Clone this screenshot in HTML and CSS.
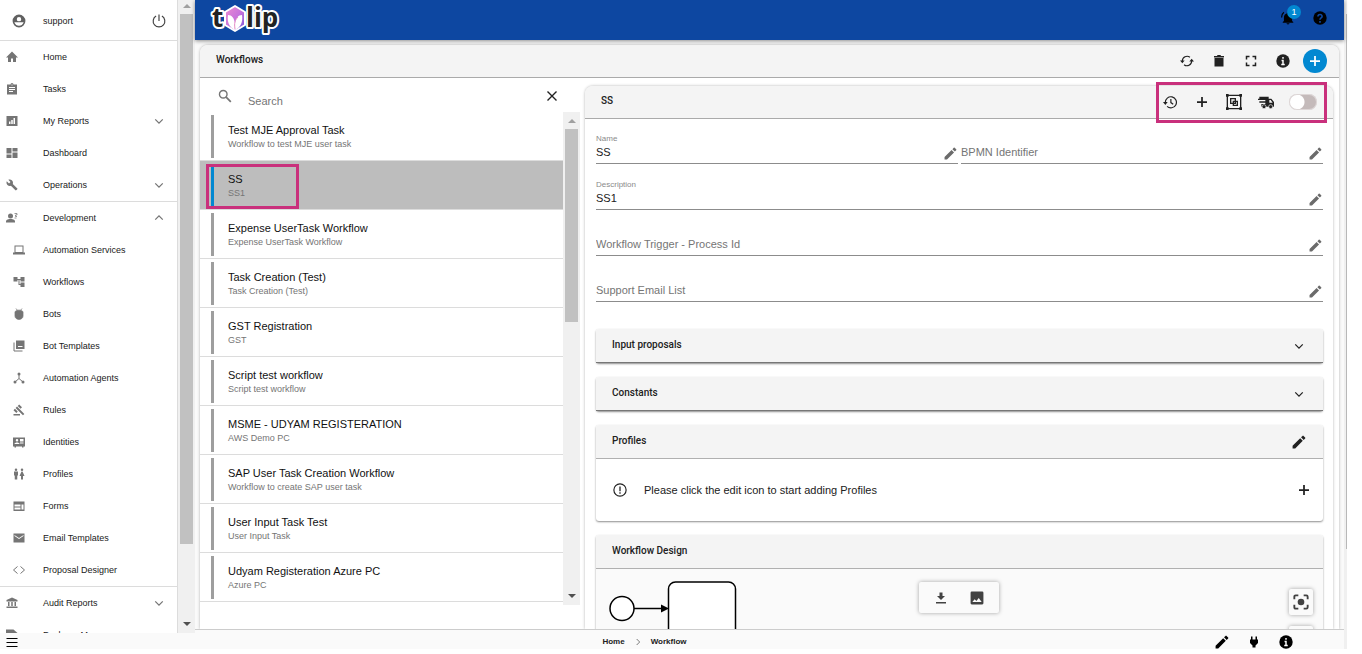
FILE: index.html
```html
<!DOCTYPE html>
<html lang="en">
<head>
<meta charset="utf-8">
<title>Workflows</title>
<link rel="stylesheet" href="styles.css">
</head>
<body>
<svg class="sprite" aria-hidden="true">
  <symbol id="account" viewBox="0 0 24 24"><path fill-rule="evenodd" d="M12 1a11 11 0 1 0 0 22 11 11 0 0 0 0-22zm0 4a3.8 3.8 0 1 1 0 7.600A3.800 3.800 0 0 1 12 5zM4 14h16c-1.500 4-4.500 6-8 6s-6.500-2-8-6z"/></symbol>
  <symbol id="power" viewBox="0 0 24 24"><path d="M12 1v11M7 3.500a10 10 0 1 0 10 0" fill="none" stroke="currentColor" stroke-width="2"/></symbol>
  <symbol id="home" viewBox="0 0 24 24"><path d="M10 22v-7h4v7h6v-9h4L12 1 0 13h4v9z"/></symbol>
  <symbol id="tasks" viewBox="0 0 24 24"><path fill-rule="evenodd" d="M22 3h-7a3 3 0 0 0-6 0H2v20h20V3zM11 3h2v2h-2zm3 15H6v-2h8zm4-4H6v-2h12zm0-4H6V8h12z"/></symbol>
  <symbol id="reports" viewBox="0 0 24 24"><path fill-rule="evenodd" d="M1 2h22v20H1zM6 13h3v5H6zM10.500 10h3v8h-3zM15 6h3v12h-3z"/></symbol>
  <symbol id="dashboard" viewBox="0 0 24 24"><path d="M1 2h10v11H1zM1 15h10v7H1zM13 11h10v11H13zM13 2h10v7H13z"/></symbol>
  <symbol id="wrench" viewBox="0 0 24 24"><path d="M22.700 19l-9.100-9.100c.9-2.300.4-5-1.500-6.900-2-2-5-2.400-7.400-1.300L9 6 6 9 1.600 4.700C.4 7.100.9 10.100 2.900 12.100c1.900 1.900 4.600 2.400 6.900 1.500l9.100 9.100c.4.400 1 .4 1.400 0l2.300-2.300c.5-.4.5-1.100.1-1.400z"/></symbol>
  <symbol id="developer" viewBox="0 0 24 24"><circle cx="9" cy="8" r="5"/><path d="M0 21v-2c0-4 6-5 9-5s9 1 9 5v2z"/><path d="M17 3h5v3h-3v3h3M17 12h4" fill="none" stroke="currentColor" stroke-width="1.500"/></symbol>
  <symbol id="laptop" viewBox="0 0 24 24"><path fill-rule="evenodd" d="M3 3h18v14h3v4H0v-4h3zm2 2v11h14V5z"/></symbol>
  <symbol id="tree" viewBox="0 0 24 24"><path d="M23 11V2h-8v4H9V2H1v9h8V8h2v10h4v4h8v-9h-8v3h-2V8h2v3z"/></symbol>
  <symbol id="bug" viewBox="0 0 24 24"><path d="M4 8c1-5 15-5 16 0v8c0 9-16 9-16 0zM6 1l3 4M18 1l-3 4" stroke="currentColor" stroke-width="1.500"/></symbol>
  <symbol id="library" viewBox="0 0 24 24"><path fill-rule="evenodd" d="M6 1h17v17H6zm4 11v2h9v-2z"/><path d="M2 5v17h17" fill="none" stroke="currentColor" stroke-width="2"/></symbol>
  <symbol id="hub" viewBox="0 0 24 24"><path d="M12 5v8l-8 7M12 13l8 7" fill="none" stroke="currentColor" stroke-width="2"/><circle cx="12" cy="4" r="3"/><circle cx="4" cy="20" r="3"/><circle cx="20" cy="20" r="3"/></symbol>
  <symbol id="gavel" viewBox="0 0 24 24"><path d="M1 20h13v3H1zM5.200 8.100l2.900-2.900 14.600 14.700-2.800 2.800zM12.300 1l5.700 5.700-2.900 2.800-5.600-5.700zM3.800 9.500l5.700 5.700L6.700 18 1 12.300z"/></symbol>
  <symbol id="idcard" viewBox="0 0 24 24"><path fill-rule="evenodd" d="M0 3h24v18h-3v2h-3v-2H6v2H3v-2H0zm3 13h10c0-4-10-4-10 0zm5-10a2.500 2.500 0 1 0 0 5 2.500 2.500 0 0 0 0-5zm6 0v5h7V6zm0 7v2h7v-2z"/></symbol>
  <symbol id="people" viewBox="0 0 24 24"><circle cx="6" cy="3.500" r="2.500"/><circle cx="18" cy="3.500" r="2.500"/><path d="M2 7h8v8H8.500v8h-5v-8H2zM17 7h2l4 9h-3v7h-4v-7h-3z"/></symbol>
  <symbol id="form" viewBox="0 0 24 24"><path fill-rule="evenodd" d="M1 3h22v19H1zm2 6v4h12V9zm0 6v4h12v-4zm14-6v10h4V9z"/></symbol>
  <symbol id="mail" viewBox="0 0 24 24"><path fill-rule="evenodd" d="M1 3h22v18H1zm2 3v2l9 6 9-6V6l-9 6z"/></symbol>
  <symbol id="code" viewBox="0 0 24 24"><path d="M9 5l-8 7 8 7M15 5l8 7-8 7" fill="none" stroke="currentColor" stroke-width="2"/></symbol>
  <symbol id="bank" viewBox="0 0 24 24"><path d="M12 1l11 5v3H1V6zM4 10h3v8H4zM10.500 10h3v8h-3zM17 10h3v8h-3zM1 19h22v3H1z"/></symbol>
  <symbol id="package" viewBox="0 0 24 24"><path d="M0 1h15l8 7v15H0z"/></symbol>
  <symbol id="down" viewBox="0 0 24 24"><path d="M3 8l9 9 9-9" fill="none" stroke="currentColor" stroke-width="3"/></symbol>
  <symbol id="right" viewBox="0 0 24 24"><path d="M8 3l9 9-9 9" fill="none" stroke="currentColor" stroke-width="2.500"/></symbol>
  <symbol id="menu" viewBox="0 0 24 24"><path d="M1 5h22M1 13h22M1 21h22" stroke="currentColor" stroke-width="2"/></symbol>
  <symbol id="search" viewBox="0 0 24 24"><circle cx="9" cy="9" r="6.500" fill="none" stroke="currentColor" stroke-width="2.400"/><path d="M14 14l8 8" stroke="currentColor" stroke-width="3"/></symbol>
  <symbol id="close" viewBox="0 0 24 24"><path d="M3 3l18 18M21 3L3 21" stroke="currentColor" stroke-width="2.800"/></symbol>
  <symbol id="bell" viewBox="0 0 24 24"><path d="M12 23c1.500 0 2.500-1 2.500-2h-5c0 1 1 2 2.500 2zm7-6v-6c0-3.500-2-6-5-6.700V3a2 2 0 0 0-4 0v1.300C7 5 5 7.500 5 11v6l-2 2v1h18v-1z"/><path d="M5 2C2 4 1 7 1 11" fill="none" stroke="currentColor" stroke-width="2"/></symbol>
  <symbol id="help" viewBox="0 0 24 24"><circle cx="12" cy="12" r="11.500"/><path d="M8.500 9.500c0-5 7.500-4.500 7 0-.3 2.500-3.500 2.500-3.500 5.500M12 17v3" fill="none" stroke="#0d47a1" stroke-width="2.800"/></symbol>
  <symbol id="sync" viewBox="0 0 24 24"><path d="M4 12a8 8 0 0 1 13-6.300M20 12a8 8 0 0 1-13 6.300" fill="none" stroke="currentColor" stroke-width="2"/><path d="M0 11h8l-4 5zM16 13h8l-4-5z"/></symbol>
  <symbol id="trash" viewBox="0 0 24 24"><path d="M3 6h18v17H3zM2 2h6l1-2h6l1 2h6v3H2z"/></symbol>
  <symbol id="expand" viewBox="0 0 24 24"><path d="M3 9V3h6M15 3h6v6M21 15v6h-6M9 21H3v-6" fill="none" stroke="currentColor" stroke-width="3"/></symbol>
  <symbol id="info" viewBox="0 0 24 24"><circle cx="12" cy="12" r="11.500"/><path d="M12 5v3M9.500 11H12v6M9 18h6" fill="none" stroke="#fff" stroke-width="2.500"/></symbol>
  <symbol id="plus" viewBox="0 0 24 24"><path d="M12 2v20M2 12h20" stroke="currentColor" stroke-width="3.500"/></symbol>
  <symbol id="history" viewBox="0 0 24 24"><path d="M4 13A9.500 9.500 0 1 1 7 19.500M13.500 7v6l4 3" fill="none" stroke="currentColor" stroke-width="2"/><path d="M0 12h8l-4 5z"/></symbol>
  <symbol id="group" viewBox="0 0 24 24"><path d="M2 2h20v20H2zM7 7h7v7H7zM11 11h6v6h-6z" fill="none" stroke="currentColor" stroke-width="2"/><path d="M0 0h4v4H0zM20 0h4v4h-4zM0 20h4v4H0zM20 20h4v4h-4z"/></symbol>
  <symbol id="truck" viewBox="0 0 24 24"><path fill-rule="evenodd" d="M2 4h14v3h4l4 5v7H5v-4h6v-2H2v-2h9V9H0V7h2zm15 5v4h5l-3-4z"/><circle cx="9" cy="19" r="3" stroke="#f4f4f4"/><circle cx="19" cy="19" r="3" stroke="#f4f4f4"/></symbol>
  <symbol id="pencil" viewBox="0 0 24 24"><path d="M1 18.500V23h4.500L18.500 10 14 5.500zM22.500 6a1.300 1.300 0 0 0 0-1.800l-2.700-2.700a1.300 1.300 0 0 0-1.800 0L15.500 4 20 8.500z"/></symbol>
  <symbol id="alert" viewBox="0 0 24 24"><circle cx="12" cy="12" r="10.500" fill="none" stroke="currentColor" stroke-width="2"/><path d="M12 6v8M12 16v2.500" stroke="currentColor" stroke-width="2.200"/></symbol>
  <symbol id="download" viewBox="0 0 24 24"><path d="M9 1h6v7h5l-8 8-8-8h5zM2 20h20v3H2z"/></symbol>
  <symbol id="image" viewBox="0 0 24 24"><path fill-rule="evenodd" d="M3 1h18q2 0 2 2v18q0 2-2 2H3q-2 0-2-2V3q0-2 2-2zm1 18h16l-5-7-4 5-3-3z"/></symbol>
  <symbol id="focus" viewBox="0 0 24 24"><circle cx="12" cy="12" r="5"/><path d="M2 8V4q0-2 2-2h4M16 2h4q2 0 2 2v4M22 16v4q0 2-2 2h-4M8 22H4q-2 0-2-2v-4" fill="none" stroke="currentColor" stroke-width="2.800"/></symbol>
  <symbol id="plug" viewBox="0 0 24 24"><path d="M6 1h3v6h6V1h3v6h2v7l-5 5v4H9v-4l-5-5V7h2z"/></symbol>
</svg>

<div class="app">
  <aside class="side">
    <div class="side-view">
      <nav class="nav">
        <div class="user"><svg class="icon i14"><use href="#account"/></svg><span>support</span><button class="btn" aria-label="Log out"><svg class="icon i14"><use href="#power"/></svg></button></div>
        <div class="nav-group">
          <a class="nav-item" href="#"><svg class="icon i12"><use href="#home"/></svg>Home</a>
          <a class="nav-item" href="#"><svg class="icon i12"><use href="#tasks"/></svg>Tasks</a>
          <a class="nav-item" href="#"><svg class="icon i12"><use href="#reports"/></svg>My Reports<svg class="icon caret"><use href="#down"/></svg></a>
          <a class="nav-item" href="#"><svg class="icon i12"><use href="#dashboard"/></svg>Dashboard</a>
          <a class="nav-item" href="#"><svg class="icon i12"><use href="#wrench"/></svg>Operations<svg class="icon caret"><use href="#down"/></svg></a>
        </div>
        <div class="nav-group">
          <a class="nav-item" href="#"><svg class="icon i12"><use href="#developer"/></svg>Development<svg class="icon caret up"><use href="#down"/></svg></a>
          <a class="nav-item sub" href="#"><svg class="icon i12"><use href="#laptop"/></svg>Automation Services</a>
          <a class="nav-item sub" href="#"><svg class="icon i12"><use href="#tree"/></svg>Workflows</a>
          <a class="nav-item sub" href="#"><svg class="icon i12"><use href="#bug"/></svg>Bots</a>
          <a class="nav-item sub" href="#"><svg class="icon i12"><use href="#library"/></svg>Bot Templates</a>
          <a class="nav-item sub" href="#"><svg class="icon i12"><use href="#hub"/></svg>Automation Agents</a>
          <a class="nav-item sub" href="#"><svg class="icon i12"><use href="#gavel"/></svg>Rules</a>
          <a class="nav-item sub" href="#"><svg class="icon i12"><use href="#idcard"/></svg>Identities</a>
          <a class="nav-item sub" href="#"><svg class="icon i12"><use href="#people"/></svg>Profiles</a>
          <a class="nav-item sub" href="#"><svg class="icon i12"><use href="#form"/></svg>Forms</a>
          <a class="nav-item sub" href="#"><svg class="icon i12"><use href="#mail"/></svg>Email Templates</a>
          <a class="nav-item sub" href="#"><svg class="icon i12"><use href="#code"/></svg>Proposal Designer</a>
        </div>
        <div class="nav-group">
          <a class="nav-item" href="#"><svg class="icon i12"><use href="#bank"/></svg>Audit Reports<svg class="icon caret"><use href="#down"/></svg></a>
          <a class="nav-item" href="#"><svg class="icon i12"><use href="#package"/></svg>Package Manager</a>
        </div>
      </nav>
      <div class="scroll"><i class="arrow arrow-up"></i><i class="thumb side-thumb"></i><i class="arrow arrow-down"></i></div>
    </div>
    <div class="side-foot"><button class="btn" aria-label="Menu"><svg class="icon i12"><use href="#menu"/></svg></button></div>
  </aside>

  <div class="page">
    <header class="top">
      <svg class="logo" viewBox="0 0 72 40" role="img" aria-label="tulip">
        <defs><linearGradient id="petal" x1="0" y1="0" x2="1" y2="1"><stop offset="0" stop-color="#f08ccf"/><stop offset=".5" stop-color="#c874dc"/><stop offset="1" stop-color="#7455d8"/></linearGradient></defs>
        <g class="logo-text"><text x="4" y="27">t</text><text x="38" y="27">lip</text></g>
        <path d="M27 6l10 6v13l-10 6-10-6V12z" fill="url(#petal)" stroke="#fff" stroke-width="2" stroke-linejoin="round"/>
        <path d="M20 15c4 0 6 3 7 8 1-5 3-8 7-8 1 7-1 12-7 15-6-3-8-8-7-15z" fill="#fff"/>
        <path d="M27 29c-1-6 0-9 3-12" fill="none" stroke="#e58bc5" stroke-width="1"/>
      </svg>
      <div class="top-tools">
        <button class="btn bell" aria-label="Notifications"><svg class="icon i14"><use href="#bell"/></svg><span class="badge">1</span></button>
        <button class="btn" aria-label="Help"><svg class="icon i14"><use href="#help"/></svg></button>
      </div>
    </header>

    <main class="content">
      <section class="card">
        <div class="card-head">
          <h1 class="heading">Workflows</h1>
          <div class="tools">
            <button class="btn tool" aria-label="Refresh"><svg class="icon i14"><use href="#sync"/></svg></button>
            <button class="btn tool" aria-label="Delete"><svg class="icon i12"><use href="#trash"/></svg></button>
            <button class="btn tool" aria-label="Full screen"><svg class="icon i12"><use href="#expand"/></svg></button>
            <button class="btn tool" aria-label="Information"><svg class="icon i14"><use href="#info"/></svg></button>
            <div class="tool"><button class="btn add" aria-label="Add workflow"><svg class="icon i12"><use href="#plus"/></svg></button></div>
          </div>
        </div>
        <div class="split">
          <div class="list-pane">
            <div class="search"><svg class="icon i14"><use href="#search"/></svg><input class="search-input" type="text" placeholder="Search" aria-label="Search"><button class="btn" aria-label="Clear search"><svg class="icon i12"><use href="#close"/></svg></button></div>
            <div class="list-view">
              <ul class="list">
                <li class="item"><div class="item-text"><b>Test MJE Approval Task</b><span>Workflow to test MJE user task</span></div></li>
                <li class="item selected"><div class="item-text"><b>SS</b><span>SS1</span></div><i class="mark mark-item"></i></li>
                <li class="item"><div class="item-text"><b>Expense UserTask Workflow</b><span>Expense UserTask Workflow</span></div></li>
                <li class="item"><div class="item-text"><b>Task Creation (Test)</b><span>Task Creation (Test)</span></div></li>
                <li class="item"><div class="item-text"><b>GST Registration</b><span>GST</span></div></li>
                <li class="item"><div class="item-text"><b>Script test workflow</b><span>Script test workflow</span></div></li>
                <li class="item"><div class="item-text"><b>MSME - UDYAM REGISTERATION</b><span>AWS Demo PC</span></div></li>
                <li class="item"><div class="item-text"><b>SAP User Task Creation Workflow</b><span>Workflow to create SAP user task</span></div></li>
                <li class="item"><div class="item-text"><b>User Input Task Test</b><span>User Input Task</span></div></li>
                <li class="item"><div class="item-text"><b>Udyam Registeration Azure PC</b><span>Azure PC</span></div></li>
              </ul>
              <div class="scroll"><i class="arrow arrow-up"></i><i class="thumb list-thumb"></i><i class="arrow arrow-down"></i></div>
            </div>
          </div>

          <section class="detail">
            <div class="card-head detail-head">
              <h2 class="heading">SS</h2>
              <div class="tools">
                <button class="btn tool" aria-label="History"><svg class="icon i14"><use href="#history"/></svg></button>
                <button class="btn tool" aria-label="Add"><svg class="icon i12"><use href="#plus"/></svg></button>
                <button class="btn tool" aria-label="Group"><svg class="icon i16"><use href="#group"/></svg></button>
                <button class="btn tool" aria-label="Ship"><svg class="icon i16"><use href="#truck"/></svg></button>
                <input class="switch" type="checkbox" aria-label="Enabled">
                <i class="mark mark-tools"></i>
              </div>
            </div>
            <div class="detail-body">
              <div class="field-row">
                <div class="field"><label for="name">Name</label><div class="field-line"><input id="name" type="text" value="SS"><button class="btn" aria-label="Edit name"><svg class="icon i14"><use href="#pencil"/></svg></button></div></div>
                <div class="field"><div class="field-line"><input type="text" placeholder="BPMN Identifier" aria-label="BPMN Identifier"><button class="btn" aria-label="Edit BPMN identifier"><svg class="icon i14"><use href="#pencil"/></svg></button></div></div>
              </div>
              <div class="field"><label for="desc">Description</label><div class="field-line"><input id="desc" type="text" value="SS1"><button class="btn" aria-label="Edit description"><svg class="icon i14"><use href="#pencil"/></svg></button></div></div>
              <div class="field"><div class="field-line"><input type="text" placeholder="Workflow Trigger - Process Id" aria-label="Workflow Trigger - Process Id"><button class="btn" aria-label="Edit trigger"><svg class="icon i14"><use href="#pencil"/></svg></button></div></div>
              <div class="field"><div class="field-line"><input type="text" placeholder="Support Email List" aria-label="Support Email List"><button class="btn" aria-label="Edit email list"><svg class="icon i14"><use href="#pencil"/></svg></button></div></div>

              <div class="panels">
                <section class="panel closed"><div class="panel-head"><h3 class="heading">Input proposals</h3><button class="btn" aria-label="Expand input proposals"><svg class="icon caret"><use href="#down"/></svg></button></div></section>
                <section class="panel closed"><div class="panel-head"><h3 class="heading">Constants</h3><button class="btn" aria-label="Expand constants"><svg class="icon caret"><use href="#down"/></svg></button></div></section>
                <section class="panel">
                  <div class="panel-head"><h3 class="heading">Profiles</h3><button class="btn" aria-label="Edit profiles"><svg class="icon i14"><use href="#pencil"/></svg></button></div>
                  <div class="hint"><svg class="icon i14"><use href="#alert"/></svg><span>Please click the edit icon to start adding Profiles</span><button class="btn" aria-label="Add profile"><svg class="icon i12"><use href="#plus"/></svg></button></div>
                </section>
                <section class="panel">
                  <div class="panel-head"><h3 class="heading">Workflow Design</h3></div>
                  <div class="canvas">
                    <svg class="diagram" viewBox="0 0 160 100" aria-hidden="true"><g fill="#fff" stroke="#000" stroke-width="1.500"><circle cx="26" cy="39.500" r="12"/><rect x="72.500" y="13" width="67" height="80" rx="7"/><path d="M38 39.500h28"/></g><path d="M65 35.500l8 4-8 4z"/></svg>
                    <div class="float export"><button class="btn" aria-label="Download"><svg class="icon i12"><use href="#download"/></svg></button><button class="btn" aria-label="Export image"><svg class="icon i14"><use href="#image"/></svg></button></div>
                    <div class="zoom-tools"><button class="btn float fit" aria-label="Fit view"><svg class="icon i16"><use href="#focus"/></svg></button><button class="btn float fit" aria-label="Zoom in"></button></div>
                  </div>
                </section>
              </div>
            </div>
          </section>
        </div>
      </section>
    </main>

    <footer class="foot">
      <nav class="crumbs"><a href="#">Home</a><svg class="icon i8"><use href="#right"/></svg><a href="#">Workflow</a></nav>
      <div class="foot-tools">
        <button class="btn tool" aria-label="Edit"><svg class="icon i14"><use href="#pencil"/></svg></button>
        <button class="btn tool" aria-label="Connection"><svg class="icon i12"><use href="#plug"/></svg></button>
        <button class="btn tool" aria-label="About"><svg class="icon i14"><use href="#info"/></svg></button>
      </div>
    </footer>
  </div>
  <div class="page-scroll"><i class="page-thumb"></i></div>
</div>
</body>
</html>
```
FILE: styles.css
```css
* { box-sizing: border-box; }
body {
  margin: 0;
  height: 100vh;
  padding: 0 15px 5px 0;
  overflow: hidden;
  background: #fff;
  color: #212121;
  font-family: "Liberation Sans", Arial, sans-serif;
  font-size: 11px;
}
h1, h2, h3, ul { margin: 0; padding: 0; }
a { color: inherit; text-decoration: none; }
input { font: inherit; color: inherit; background: none; border: 0; padding: 0; min-width: 0; outline: 0; }
.sprite { display: none; }
.btn { display: flex; align-items: center; justify-content: center; padding: 0; border: 0; background: none; color: inherit; font: inherit; }
.icon { display: block; flex: none; fill: currentColor; }
.i8 { width: 8px; height: 8px; color: #616161; }
.i12 { width: 12px; height: 12px; }
.i14 { width: 14px; height: 14px; }
.i16 { width: 16px; height: 16px; }
.caret { width: 10px; height: 10px; }
.up { transform: rotate(180deg); }
.heading { font-family: Roboto, "Liberation Sans", sans-serif; font-size: 10px; font-weight: 500; line-height: 12px; color: #212121; }

.app { display: grid; grid-template-columns: 195px 1fr 3px; height: 100%; }

/* Sidebar */
.side { display: flex; flex-direction: column; min-height: 0; }
.side-view { display: flex; flex: 1; min-height: 0; }
.nav { flex: 1; overflow: hidden; border-right: 1px solid #dcdcdc; font-size: 9px; color: #212121; }
.user, .nav-item { display: flex; align-items: center; }
.user { height: 40px; padding: 2px 11px 0 12px; gap: 17px; }
.user .icon { color: #616161; }
.user .btn { margin-left: auto; }
.user .btn .icon { color: #424242; }
.nav-group { border-top: 1px solid #dcdcdc; }
.nav-item { height: 32px; padding: 0 13px 0 6px; gap: 25px; }
.nav-item.sub { padding-left: 13px; gap: 18px; }
.nav-item .icon { color: #757575; }
.nav-item .caret { margin-left: auto; }
.side-foot { display: flex; align-items: center; height: 16px; padding: 2px 6px 0; background: #fafafa; color: #000; }

/* Scroll bars */
.scroll { display: flex; flex-direction: column; align-items: center; width: 17px; background: #f0f0f0; }
.arrow { border: 4px solid transparent; }
.arrow-up { border-top: 0; border-bottom-color: #a0a0a0; margin: 7px 0 6px; }
.arrow-down { border-bottom: 0; border-top-color: #505050; margin: auto 0 7px; }
.thumb { width: 13px; background: #c1c1c1; }
.side .arrow-up { margin: 4px 0 6px; }
.side-thumb { flex: 0 1 530px; }
.list-thumb { flex: 0 1 193px; }
.page-scroll { padding: 14px 0 100px; background: #f0f0f0; }
.page-thumb { display: block; height: 100%; margin-left: 2px; background: #b8b8b8; }

/* Top bar */
.page { display: flex; flex-direction: column; min-width: 0; min-height: 0; }
.top { display: flex; align-items: center; flex: none; height: 40px; padding: 0 17px 0 13px; background: #0d47a1; box-shadow: 0 1px 4px rgba(0, 0, 0, .45); z-index: 1; }
.logo { width: 72px; height: 40px; }
.logo-text { font: bold 26px "Open Sans", sans-serif; fill: #222; stroke: #fff; stroke-width: 4px; stroke-linejoin: round; paint-order: stroke; }
.top-tools { display: flex; gap: 18px; margin-left: auto; padding-bottom: 4px; color: #000; }
.bell { position: relative; }
.badge { position: absolute; left: 6px; top: -6px; width: 14px; height: 14px; border-radius: 50%; background: #0288d1; color: #fff; font-size: 9px; line-height: 14px; text-align: center; }

/* Cards */
.content { flex: 1; min-height: 0; overflow: hidden; padding: 5px 5px 0; background: #fafafa; }
.card { display: flex; flex-direction: column; height: 100%; background: #fff; border-radius: 8px 8px 0 0; box-shadow: 0 0 3px rgba(0, 0, 0, .3); }
.card-head { display: flex; align-items: center; flex: none; height: 33px; padding: 0 8px 0 16px; background: #f4f4f4; border-bottom: 1px solid #aaa; border-radius: 8px 8px 0 0; }
.card-head .heading { padding-bottom: 2px; }
.tools { display: flex; align-items: center; margin-left: auto; position: relative; }
.tool { display: flex; justify-content: center; width: 32px; }
.add { width: 24px; height: 24px; border-radius: 50%; background: #0288d1; color: #fff; }
.split { display: flex; flex: 1; min-height: 0; }

/* Workflow list */
.list-pane { display: flex; flex-direction: column; flex: none; width: 380px; }
.search { display: flex; align-items: center; flex: none; height: 34px; padding: 2px 22px 0 18px; gap: 16px; }
.search .i14 { color: #757575; }
.search-input { flex: 1; height: 26px; padding-top: 10px; }
input::placeholder { color: #757575; opacity: 1; }
.list-view { display: flex; flex: 0 1 493px; min-height: 0; }
.list { flex: 1; list-style: none; overflow: hidden; }
.item { display: flex; position: relative; height: 49px; padding: 3px 0 2px 11px; border-bottom: 1px solid #dcdcdc; }
.item-text { flex: 1; border-left: 3px solid #9e9e9e; padding: 8px 0 0 14px; }
.item b, .item span { display: block; }
.item b { font-weight: 400; line-height: 14px; color: #111; }
.item span { font-size: 9px; line-height: 14px; color: #757575; }
.item.selected { background: #bdbdbd; }
.selected .item-text { border-color: #0288d1; }
.mark { position: absolute; border: 3px solid #c9307c; pointer-events: none; }
.mark-item { left: 6px; top: 3px; width: 93px; height: 45px; }
.mark-tools { inset: -12px -10px -13px 2px; }

/* Workflow detail */
.detail { display: flex; flex-direction: column; flex: 1; min-width: 0; margin: 8px 6px 0 5px; border-radius: 8px 8px 0 0; box-shadow: 0 0 3px rgba(0, 0, 0, .3); }
.detail-head { padding-right: 16px; }
.switch { appearance: none; width: 28px; height: 16px; margin: 0 0 0 7px; border-radius: 8px; background: radial-gradient(circle at 8px 8px, #fff 7px, transparent 8px) #c4baba; box-shadow: inset 0 0 0 1px #ddd6d6; }
.detail-body { flex: 1; min-height: 0; overflow: hidden; padding: 0 10px 0 11px; }
.field-row { display: flex; gap: 3px; }
.field { display: flex; flex: 1; flex-direction: column; justify-content: flex-end; height: 45px; }
.field + .field, .field-row + .field { height: 46px; }
.field-row .field { height: 45px; }
.field label { font-size: 8px; line-height: 10px; color: #8a8a8a; }
.field-line { display: flex; align-items: center; height: 20px; border-bottom: 1px solid #8c8c8c; }
.field-line input { flex: 1; height: 18px; padding-bottom: 3px; }
.field-line .btn { width: 16px; color: #6b6b6b; }
.field-line .btn .icon { width: 13px; height: 13px; }
.panels { display: flex; flex-direction: column; gap: 14px; padding: 27px 0 8px; margin: 0 -4px; padding-inline: 4px; }
.panel { background: #fff; border-radius: 3px; box-shadow: 0 1px 2px rgba(0, 0, 0, .45); }
.panel-head { display: flex; align-items: center; justify-content: space-between; height: 34px; padding: 0 17px 0 16px; background: #f4f4f4; border-bottom: 1px solid #b0b0b0; border-radius: 3px 3px 0 0; }
.panel-head .heading { padding-bottom: 2px; }
.closed .panel-head { padding-right: 19px; border-bottom-color: #777; }
.hint { display: flex; align-items: center; height: 62px; padding: 0 13px 0 17px; gap: 17px; }
.hint .btn { margin-left: auto; }
.canvas { position: relative; height: 110px; background: #fafafa; }
.diagram { display: block; width: 160px; height: 100px; }
.float { background: #fafafa; box-shadow: 0 0 4px rgba(0, 0, 0, .35); color: #424242; border-radius: 2px; }
.export { position: absolute; top: 13px; left: 50%; display: flex; align-items: center; gap: 23px; width: 80px; height: 31px; padding: 0 15px 0 16px; margin-left: -41px; }
.zoom-tools { position: absolute; top: 20px; right: 10px; display: grid; gap: 11px; }
.fit { width: 24px; height: 26px; }

/* Footer */
.foot { display: flex; flex: none; position: relative; align-items: center; justify-content: center; height: 20px; border-top: 1px solid #ccc; background: #fafafa; z-index: 1; }
.crumbs { display: flex; align-items: center; gap: 9px; margin-right: 250px; padding-top: 4px; font-size: 8px; font-weight: 700; line-height: 10px; }
.foot-tools { display: flex; position: absolute; right: 42px; top: 5px; color: #000; }
```
